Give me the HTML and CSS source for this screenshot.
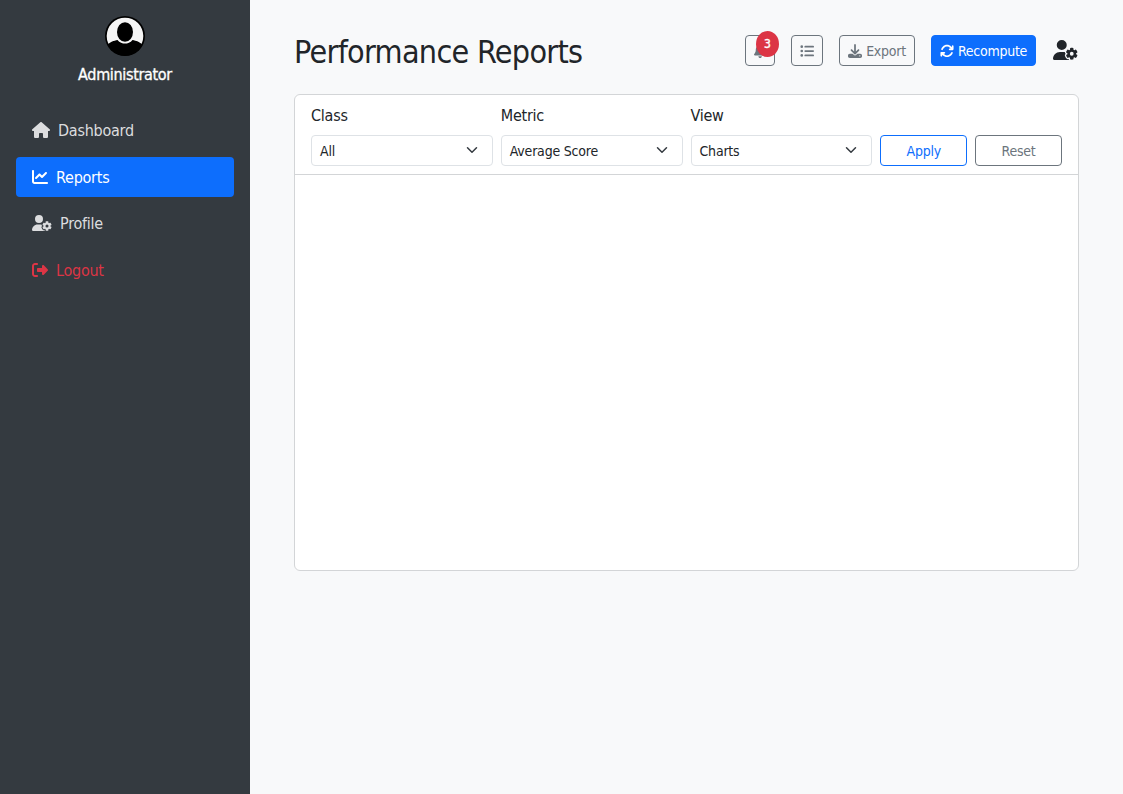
FILE: index.html
```html
<!DOCTYPE html>
<html lang="en">
<head>
<meta charset="utf-8">
<title>Performance Reports</title>
<link rel="stylesheet" href="styles.css">
</head>
<body>
<svg width="0" height="0" class="sprite">
<symbol id="user-gear" viewBox="0 0 640 512"><path d="M224 0a128 128 0 1 1 0 256A128 128 0 1 1 224 0zM178.3 304h91.4c11.8 0 23.4 1.2 34.5 3.3c-2.1 18.5 7.4 35.6 21.8 44.8c-16.6 10.6-26.7 31.6-20 53.3c4 12.9 9.4 25.5 16.4 37.6s15.2 23.1 24.4 33c15.7 16.9 39.6 18.4 57.2 8.7v.9c0 9.2 2.7 18.5 7.9 26.3H29.7C13.3 512 0 498.7 0 482.3C0 383.8 79.8 304 178.3 304zM436 218.2c0-7 4.5-13.3 11.3-14.8c10.5-2.4 21.5-3.7 32.7-3.7s22.2 1.3 32.7 3.7c6.8 1.5 11.3 7.8 11.3 14.8v30.6c7.9 3.4 15.4 7.7 22.3 12.8l24.9-14.3c6.1-3.5 13.7-2.7 18.5 2.4c7.6 8.1 14.3 17.2 20.1 27.2s10.3 20.4 13.5 31c2.1 6.7-1.1 13.7-7.2 17.2l-25 14.4c.4 4 .7 8.1 .7 12.3s-.2 8.2-.7 12.3l25 14.4c6.1 3.5 9.2 10.5 7.2 17.2c-3.3 10.6-7.8 21-13.5 31s-12.5 19.1-20.1 27.2c-4.8 5.1-12.5 5.9-18.5 2.4l-24.9-14.3c-6.9 5.1-14.3 9.4-22.3 12.8l0 30.6c0 7-4.5 13.3-11.3 14.8c-10.5 2.4-21.5 3.7-32.7 3.7s-22.2-1.3-32.7-3.7c-6.8-1.5-11.3-7.8-11.3-14.8V454.8c-8-3.4-15.6-7.7-22.5-12.9l-24.7 14.3c-6.1 3.5-13.7 2.7-18.5-2.4c-7.6-8.1-14.3-17.2-20.1-27.2s-10.3-20.4-13.5-31c-2.1-6.7 1.1-13.7 7.2-17.2l24.8-14.3c-.4-4.1-.7-8.2-.7-12.4s.2-8.3 .7-12.4L343.8 325c-6.1-3.5-9.2-10.5-7.2-17.2c3.3-10.6 7.7-21 13.5-31s12.5-19.1 20.1-27.2c4.8-5.1 12.4-5.9 18.5-2.4l24.8 14.3c6.9-5.1 14.5-9.4 22.5-12.9V218.2zm92.1 133.5a48.1 48.1 0 1 0 -96.1 0 48.1 48.1 0 1 0 96.1 0z"/></symbol>
</svg>
<div class="layout">
  <aside class="sidebar">
    <div class="account">
      <svg class="avatar" viewBox="0 0 40 40"><circle cx="20" cy="20" r="20" fill="#000"/><circle cx="20" cy="20" r="18.300" fill="#f5f5f5"/><path d="M2.500 29C5 25.500 9 25 12.500 24C14.500 26.800 17.500 27.600 20 27.600S25.500 26.800 27.500 24C31 25 35 25.500 37.500 29A19.600 19.600 0 0 1 2.500 29z" fill="#000"/><ellipse cx="20" cy="16" rx="8" ry="9.800" fill="#000"/></svg>
      <div class="account-name">Administrator</div>
    </div>
    <nav class="menu">
      <a class="item dashboard"><svg width="18" height="16" viewBox="0 0 576 512"><path d="M575.8 255.5c0 18-15 32.1-32 32.1h-32l.7 160.2c0 2.7-.2 5.4-.5 8.1V472c0 22.1-17.9 40-40 40H456c-1.1 0-2.2 0-3.3-.1c-1.4 .1-2.8 .1-4.2 .1H416 392c-22.1 0-40-17.9-40-40V448 384c0-17.7-14.3-32-32-32H256c-17.7 0-32 14.3-32 32v64 24c0 22.1-17.9 40-40 40H160 128.1c-1.5 0-3-.1-4.5-.2c-1.2 .1-2.4 .2-3.6 .2H104c-22.1 0-40-17.9-40-40V360c0-.9 0-1.9 .1-2.8V287.6H32c-18 0-32-14-32-32.1c0-9 3-17 10-24L266.4 8c7-7 15-8 22-8s15 2 21 7L564.8 231.5c8 7 12 15 11 24z"/></svg><span>Dashboard</span></a>
      <a class="item active"><svg width="16" height="16" viewBox="0 0 512 512"><path d="M64 64c0-17.700-14.300-32-32-32S0 46.300 0 64V400c0 44.200 35.800 80 80 80H480c17.700 0 32-14.300 32-32s-14.300-32-32-32H80c-8.800 0-16-7.200-16-16V64zm406.600 86.600c12.500-12.500 12.500-32.800 0-45.300s-32.800-12.500-45.300 0L320 210.700l-57.400-57.400c-12.500-12.500-32.800-12.500-45.300 0l-112 112c-12.500 12.500-12.500 32.800 0 45.300s32.800 12.500 45.300 0L240 221.300l57.400 57.400c12.500 12.500 32.800 12.500 45.300 0l128-128z"/></svg><span>Reports</span></a>
      <a class="item profile"><svg width="20" height="16"><use href="#user-gear"/></svg><span>Profile</span></a>
      <a class="item logout"><svg width="16" height="16" viewBox="0 0 512 512"><path d="M377.9 105.900L500.700 228.700c7.200 7.200 11.300 17.100 11.300 27.300s-4.100 20.100-11.300 27.300L377.900 406.100c-6.400 6.400-15 9.900-24 9.900c-18.700 0-33.900-15.200-33.900-33.900l0-62.100-128 0c-17.700 0-32-14.300-32-32l0-64c0-17.700 14.300-32 32-32l128 0 0-62.100c0-18.700 15.200-33.900 33.900-33.900c9 0 17.600 3.600 24 9.900zM160 96L96 96c-17.700 0-32 14.300-32 32l0 256c0 17.700 14.300 32 32 32l64 0c17.700 0 32 14.300 32 32s-14.300 32-32 32l-64 0c-53 0-96-43-96-96L0 128C0 75 43 32 96 32l64 0c17.700 0 32 14.300 32 32s-14.300 32-32 32z"/></svg><span>Logout</span></a>
    </nav>
  </aside>
  <main class="content">
    <header class="topbar">
      <h1>Performance Reports</h1>
      <div class="actions">
        <button class="btn gray bell"><svg width="12.25" height="14" viewBox="0 0 448 512"><path d="M224 0c-17.7 0-32 14.3-32 32V51.2C119 66 64 130.6 64 208v18.8c0 47-17.3 92.4-48.5 127.6l-7.4 8.3c-8.4 9.4-10.4 22.9-5.3 34.4S19.400 416 32 416H416c12.600 0 24-7.400 29.200-18.900s3.100-25-5.300-34.400l-7.400-8.300C401.300 319.200 384 273.900 384 226.800V208c0-77.400-55-142-128-156.800V32c0-17.700-14.300-32-32-32zm45.300 493.300c12-12 18.700-28.300 18.700-45.300H224 160c0 17 6.700 33.300 18.700 45.300s28.300 18.700 45.300 18.700s33.300-6.700 45.300-18.700z"/></svg><span class="badge">3</span></button>
        <button class="btn gray list"><svg width="14" height="14" viewBox="0 0 512 512"><circle cx="64" cy="96" r="48"/><circle cx="64" cy="256" r="48"/><circle cx="64" cy="416" r="48"/><rect x="160" y="64" width="352" height="64" rx="32"/><rect x="160" y="224" width="352" height="64" rx="32"/><rect x="160" y="384" width="352" height="64" rx="32"/></svg></button>
        <button class="btn gray export"><svg width="14" height="14" viewBox="0 0 512 512"><path d="M288 32c0-17.700-14.300-32-32-32s-32 14.300-32 32V274.700l-73.400-73.400c-12.500-12.500-32.800-12.500-45.300 0s-12.500 32.800 0 45.300l128 128c12.500 12.500 32.800 12.500 45.300 0l128-128c12.500-12.500 12.500-32.800 0-45.300s-32.800-12.500-45.300 0L288 274.700V32zM64 352c-35.300 0-64 28.700-64 64v32c0 35.300 28.700 64 64 64H448c35.300 0 64-28.700 64-64V416c0-35.300-28.700-64-64-64H346.500l-45.300 45.300c-25 25-65.500 25-90.500 0L165.500 352H64zm368 56a24 24 0 1 1 0 48 24 24 0 1 1 0-48z"/></svg><span>Export</span></button>
        <button class="btn primary recompute"><svg width="14" height="14" viewBox="0 0 512 512"><path d="M105.100 202.600c7.700-21.800 20.200-42.300 37.800-59.800c62.500-62.500 163.800-62.500 226.300 0L386.300 160H352c-17.700 0-32 14.300-32 32s14.300 32 32 32H463.900c17.700 0 32-14.300 32-32V80c0-17.700-14.300-32-32-32s-32 14.300-32 32v35.200L414.400 97.600c-87.500-87.500-229.300-87.500-316.800 0C73.200 122 55.600 150.700 44.800 181.400c-5.900 16.700 2.900 34.900 19.500 40.800s34.900-2.900 40.800-19.500zM39 289.300c-5 1.500-9.800 4.200-13.700 8.200c-4 4-6.700 8.800-8.100 14c-.3 1.200-.6 2.500-.8 3.800c-.3 1.700-.4 3.400-.4 5.100V432c0 17.700 14.300 32 32 32s32-14.300 32-32V396.900l17.600 17.500c87.500 87.400 229.300 87.400 316.700 0c24.400-24.400 42.100-53.100 52.900-83.700c5.900-16.700-2.900-34.900-19.500-40.800s-34.900 2.900-40.800 19.500c-7.700 21.800-20.200 42.300-37.800 59.800c-62.500 62.500-163.800 62.500-226.300 0l-.1-.1L125.600 352H160c17.700 0 32-14.300 32-32s-14.300-32-32-32H48.400c-1.600 0-3.200 .1-4.800 .3s-3.100 .5-4.600 1z"/></svg><span>Recompute</span></button>
        <svg class="settings" width="25" height="20"><use href="#user-gear"/></svg>
      </div>
    </header>
    <section class="card">
      <div class="filters">
        <div class="field"><label>Class</label><div class="select"><span>All</span><svg viewBox="0 0 16 16"><path d="m2 5 6 6 6-6"/></svg></div></div>
        <div class="field"><label>Metric</label><div class="select"><span>Average Score</span><svg viewBox="0 0 16 16"><path d="m2 5 6 6 6-6"/></svg></div></div>
        <div class="field"><label>View</label><div class="select"><span>Charts</span><svg viewBox="0 0 16 16"><path d="m2 5 6 6 6-6"/></svg></div></div>
        <button class="btn blue"><span>Apply</span></button>
        <button class="btn gray"><span>Reset</span></button>
      </div>
    </section>
  </main>
</div>
</body>
</html>
```

FILE: styles.css
```css
* { box-sizing: border-box; }
body { margin: 0; font: 16px/24px "DejaVu Sans Condensed", "DejaVu Sans", sans-serif; font-stretch: condensed; letter-spacing: -0.25px; color: #212529; background: #f8f9fa; }
svg { fill: currentColor; flex: none; display: block; }
span, label, h1 { white-space: nowrap; }
.sprite { position: absolute; }
.layout { display: flex; height: 794px; }
.sidebar { width: 250px; background: #343a40; padding: 16px; color: #fff; }
.account { display: flex; flex-direction: column; align-items: center; gap: 7px; margin-bottom: 23px; }
.avatar { width: 40px; height: 40px; }
.account-name { letter-spacing: -0.33px; -webkit-text-stroke: 0.3px #fff; }
.menu { display: flex; flex-direction: column; gap: 6.67px; }
.item { display: flex; align-items: center; gap: 8px; height: 40px; padding: 0 16px; width: 218px; border-radius: 4px; color: #dcdddf; }
.item span { padding-top: 2px; }
.item.active { background: #0d6efd; color: #fff; }
.item.logout { color: #dc3545; }
.content { flex: 1; padding: 31px 44px 0; }
.topbar { display: flex; justify-content: space-between; align-items: center; height: 39px; margin-bottom: 24px; }
h1 { margin: 0; padding-top: 2px; font-size: 32px; line-height: 38px; font-weight: 400; letter-spacing: -0.7px; }
.actions { display: flex; align-items: center; gap: 16px; }
.btn { display: flex; align-items: center; justify-content: center; gap: 4px; height: 31px; padding: 0 8px; border: 1px solid; border-radius: 4px; background: transparent; font: inherit; font-size: 14px; line-height: 21px; letter-spacing: -0.25px; }
.btn span { padding-top: 1px; }
.gray { color: #6c757d; }
.blue { color: #0d6efd; }
.primary { background: #0d6efd; border-color: #0d6efd; color: #fff; }
.bell { position: relative; width: 30px; }
.list { width: 32px; }
.export { width: 76px; }
.recompute { width: 105px; }
.btn .badge { position: absolute; left: 10px; top: -5px; width: 23px; height: 26px; padding: 0; border-radius: 50%; background: #dc3545; color: #fff; font-size: 12px; line-height: 27px; text-align: center; letter-spacing: 0; -webkit-text-stroke: 0.4px #fff; }
.settings { margin: 0 1px 2px; }
.card { height: 477px; border: 1px solid #d3d5d7; border-radius: 6px; background: #fff; }
.filters { display: grid; grid-template-columns: repeat(3, 181.75px) repeat(2, 86.87px); gap: 8px; align-items: end; height: 80px; padding: 8px 16px; border-bottom: 1px solid #d3d5d7; }
.field { display: flex; flex-direction: column; gap: 7px; }
.select { display: flex; justify-content: space-between; align-items: center; height: 31px; padding: 0 14px 0 8px; border: 1px solid #dee2e6; border-radius: 4px; font-size: 14px; letter-spacing: -0.2px; }
.select svg { width: 12px; height: 12px; margin-bottom: 2px; fill: none; stroke: #343a40; stroke-width: 2; stroke-linecap: round; stroke-linejoin: round; }
```
